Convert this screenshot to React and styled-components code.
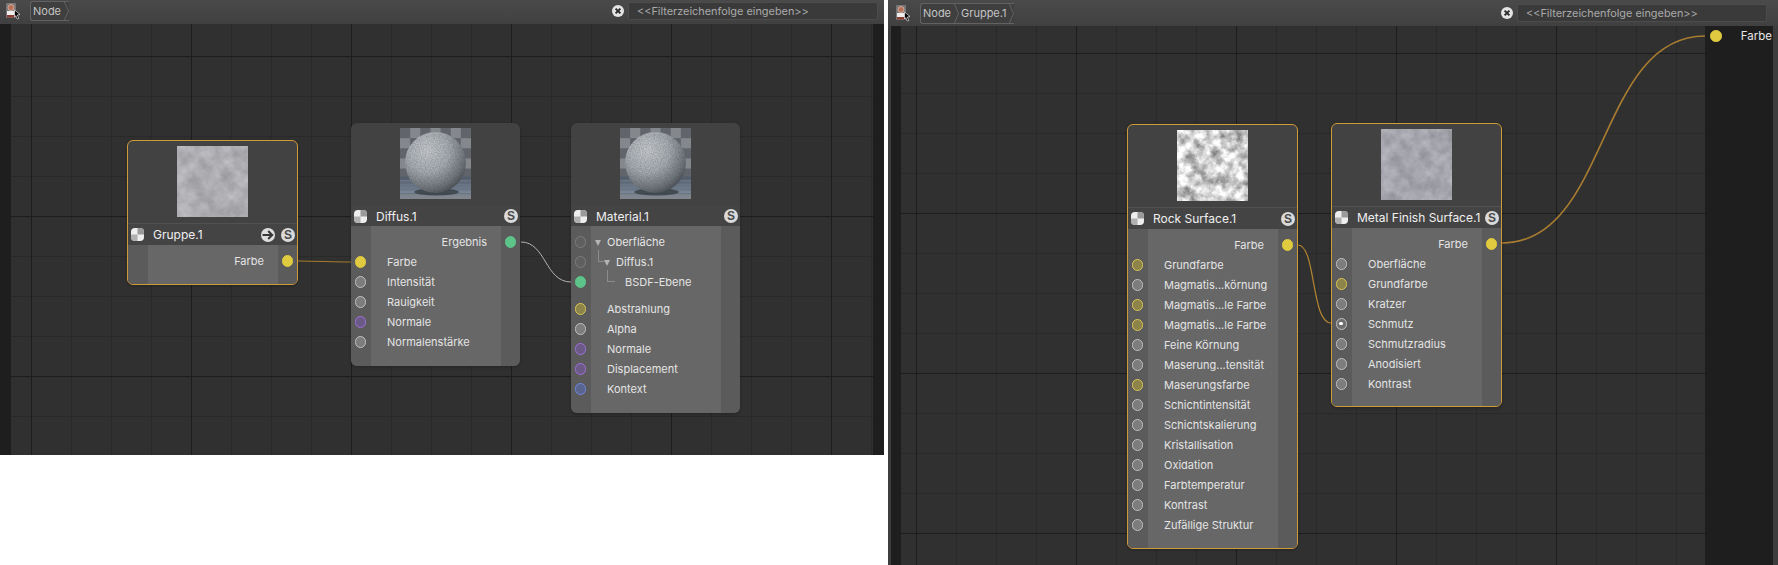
import React from "react";
import styled, { createGlobalStyle } from "styled-components";

const Global = createGlobalStyle`
  html, body { margin: 0; padding: 0; background: #fff; }
  #root { width: 1778px; height: 565px; overflow: hidden; }
`;

const Page = styled.div`
  display: flex;
  align-items: flex-start;
  gap: 4px;
  width: 1778px;
  height: 565px;
  background: #fff;
  font-family: Inter, "Liberation Sans", sans-serif;
`;

const Panel = styled.section`
  display: flex;
  flex-direction: column;
  width: ${(p) => p.$w}px;
  height: ${(p) => p.$h}px;
  background: #3d3d3d;
`;

const Toolbar = styled.header`
  display: flex;
  align-items: center;
  flex: none;
  height: ${(p) => p.$h}px;
  box-sizing: border-box;
  padding: 0 ${(p) => p.$right}px ${(p) => p.$bottom}px ${(p) => p.$left}px;
  background: linear-gradient(#4a4a4a, #404040);
`;

const AppIcon = styled.svg`
  flex: none;
  width: 17px;
  height: 18px;
  margin-right: 8px;
`;

const Crumbs = styled.nav`
  display: flex;
  align-items: stretch;
  height: ${(p) => p.$h}px;
  box-sizing: border-box;
  border: 1px solid #626262;
  border-right: 0;
  border-radius: 3px 0 0 3px;
  background: #3f3f3f;
  font-size: 11px;
  color: #c4c4c4;
`;

const Crumb = styled.span`
  display: flex;
  align-items: center;
  padding-left: 2px;
`;

const Chevron = styled.svg`
  flex: none;
  width: 5px;
  height: 100%;
  margin-left: 3px;
  overflow: visible;
`;

const Spacer = styled.div`
  flex: 1;
`;

const ClearIcon = styled.svg`
  flex: none;
  width: 12px;
  height: 12px;
  margin-right: 4px;
`;

const FilterBox = styled.div`
  flex: none;
  display: flex;
  align-items: center;
  width: 250px;
  height: 18px;
  box-sizing: border-box;
  padding-left: 8px;
  border: 1px solid #4c4c4c;
  border-radius: 2px;
  background: #3a3a3a;
  font-size: 10.9px;
  color: #aaa;
`;

const Frame = styled.div`
  flex: 1;
  display: flex;
  min-height: 0;
  padding: ${(p) => (p.$inset ? "0 5px 0 3px" : "0")};
`;

const Canvas = styled.div`
  position: relative;
  flex: 1;
  display: flex;
  justify-content: space-between;
  overflow: hidden;
  background: ${(p) => `
    linear-gradient(90deg, #1d1d1d 1px, transparent 1px) ${p.$mx}px 0 / 160px 100%,
    linear-gradient(#1d1d1d 1px, transparent 1px) 0 ${p.$my}px / 100% 160px,
    linear-gradient(90deg, #292929 1px, transparent 1px) ${p.$mx}px 0 / 40px 100%,
    linear-gradient(#292929 1px, transparent 1px) 0 ${p.$my}px / 100% 40px,
    #303030`};
`;

const Strip = styled.aside`
  flex: none;
  width: ${(p) => p.$w}px;
  background: #1e1e1e;
`;

const OutputRow = styled.div`
  display: flex;
  align-items: center;
  justify-content: space-between;
  height: 20px;
  padding: 0 1px 0 5px;
  font-size: 11.5px;
  color: #e6e6e6;
`;

const Wires = styled.svg`
  position: absolute;
  inset: 0;
  width: 100%;
  height: 100%;
  pointer-events: none;
`;

const NodeBox = styled.article`
  position: absolute;
  left: ${(p) => p.$x}px;
  top: ${(p) => p.$y}px;
  width: ${(p) => p.$w}px;
  box-sizing: border-box;
  overflow: hidden;
  border-radius: 6px;
  border: ${(p) => (p.$selected ? "1px solid #cf9a38" : "0")};
  background: #424242;
  box-shadow: 0 1px 3px rgba(0, 0, 0, 0.25);
`;

const Preview = styled.div`
  display: flex;
  justify-content: center;
  height: ${(p) => (p.$selected ? 82 : 83)}px;
  box-sizing: border-box;
  padding-top: 5px;
`;

const Thumb = styled.svg`
  display: block;
  width: 71px;
  height: 71px;
`;

const Header = styled.div`
  display: flex;
  align-items: center;
  height: ${(p) => (p.$selected ? 22 : 20)}px;
  box-sizing: border-box;
  padding: 0 ${(p) => (p.$selected ? 2 : 2)}px 0 3px;
  border-top: ${(p) => (p.$selected ? "1px solid #515151" : "0")};
  background: #444;
`;

const Checker = styled.svg`
  flex: none;
  width: 13px;
  height: 13px;
  margin-right: 9px;
`;

const Title = styled.h3`
  flex: 1;
  margin: 0;
  font-size: 12px;
  font-weight: 400;
  white-space: nowrap;
  color: #f0f0f0;
`;

const SBadge = styled.span`
  flex: none;
  display: flex;
  align-items: center;
  justify-content: center;
  width: 14px;
  height: 14px;
  border-radius: 50%;
  background: #dadada;
  font-family: "Liberation Sans", sans-serif;
  font-size: 12px;
  font-weight: 700;
  color: #4a4a4a;
`;

const ArrowIcon = styled.svg`
  flex: none;
  width: 14px;
  height: 14px;
  margin-right: 6px;
`;

const Body = styled.div`
  padding: 6px 0 ${(p) => p.$pad}px;
  background: linear-gradient(
    90deg,
    #5b5b5b 0 20px,
    #676767 20px calc(100% - 19px),
    #5b5b5b calc(100% - 19px)
  );
`;

const Row = styled.div`
  display: grid;
  grid-template-columns: 19px 1fr 19px;
  align-items: center;
  height: 20px;
  margin-top: ${(p) => p.$gap || 0}px;
`;

const PortSlot = styled.div`
  display: flex;
  justify-content: center;
`;

const Label = styled.span`
  position: relative;
  justify-self: ${(p) => (p.$out ? "end" : "start")};
  padding-left: ${(p) => (p.$out ? 0 : 17 + (p.$indent || 0) * 9)}px;
  padding-right: ${(p) => (p.$out ? 14 : 0)}px;
  font-size: 11px;
  white-space: nowrap;
  color: #e4e4e4;
`;

const PORT = {
  solidY: { b: "#e0ca40", f: "#e0ca40" },
  solidG: { b: "#5dc389", f: "#5dc389" },
  gray: { b: "#c0c0c0", f: "#7d7d7d" },
  dim: { b: "#7e7e7e", f: "#5f5f5f" },
  yellow: { b: "#dcc658", f: "#8c8448" },
  purple: { b: "#a070dc", f: "#6c5a86" },
  blue: { b: "#6e88e0", f: "#59648f" },
  active: { b: "#c0c0c0", f: "#6f6f6f" },
};

const Port = styled.span`
  position: relative;
  display: block;
  width: 11.5px;
  height: 11.5px;
  box-sizing: border-box;
  border-radius: 50%;
  border: 1.5px solid ${(p) => PORT[p.$kind].b};
  background: ${(p) => PORT[p.$kind].f};
  &::after {
    content: "";
    display: ${(p) => (p.$kind === "active" ? "block" : "none")};
    position: absolute;
    left: 2.5px;
    top: 2.5px;
    width: 3.5px;
    height: 3.5px;
    border-radius: 50%;
    background: #fff;
  }
`;

const Twist = styled.i`
  position: absolute;
  left: ${(p) => 17 + (p.$indent || 0) * 9 - 12}px;
  top: 5px;
  width: 0;
  height: 0;
  border-left: 3px solid transparent;
  border-right: 3px solid transparent;
  border-top: 6px solid #b4b4b4;
`;

const TreeLine = styled.i`
  position: absolute;
  left: ${(p) => 17 + p.$indent * 9 - 18}px;
  top: -5px;
  width: ${(p) => p.$len}px;
  height: 12px;
  box-sizing: border-box;
  border-left: 1px solid #8c8c8c;
  border-bottom: 1px solid #8c8c8c;
`;

function Stone({ id, k, c, freq, tint = 0 }) {
  const row = (extra) => `${k} 0 0 0 ${c + extra}`;
  return (
    <Thumb viewBox="0 0 70 70">
      <filter id={id} x="0" y="0" width="100%" height="100%" colorInterpolationFilters="sRGB">
        <feTurbulence type="fractalNoise" baseFrequency={freq} numOctaves="4" seed="7" />
        <feColorMatrix values={`${row(0)} ${row(0)} ${row(tint)} 0 0 0 0 1`} />
      </filter>
      <rect width="70" height="70" filter={`url(#${id})`} />
    </Thumb>
  );
}

function Sphere({ id }) {
  const cells = [];
  for (let y = 0; y < 5; y++) {
    for (let x = 0; x < 7; x++) {
      if ((x + y) % 2 === 0) cells.push(<rect key={`${x}-${y}`} x={x * 10} y={y * 10} width="10" height="10" fill="#61646a" />);
    }
  }
  return (
    <Thumb viewBox="0 0 70 70">
      <defs>
        <radialGradient id={`${id}g`} cx="0.36" cy="0.3" r="0.8">
          <stop offset="0" stopColor="#c8ccd0" />
          <stop offset="0.45" stopColor="#a8adb2" />
          <stop offset="0.8" stopColor="#6c7278" />
          <stop offset="1" stopColor="#3d4248" />
        </radialGradient>
        <linearGradient id={`${id}f`} x1="0" y1="0" x2="0" y2="1">
          <stop offset="0" stopColor="#4f5a68" />
          <stop offset="1" stopColor="#8a97a8" />
        </linearGradient>
        <filter id={`${id}n`} x="0" y="0" width="100%" height="100%" colorInterpolationFilters="sRGB">
          <feTurbulence type="fractalNoise" baseFrequency="0.8" numOctaves="2" seed="3" result="n" />
          <feColorMatrix in="n" values="0 0 0 0 0.22  0 0 0 0 0.22  0 0 0 0 0.24  0.5 0 0 0 -0.15" result="a" />
          <feComposite in="a" in2="SourceAlpha" operator="in" result="b" />
          <feMerge>
            <feMergeNode in="SourceGraphic" />
            <feMergeNode in="b" />
          </feMerge>
        </filter>
      </defs>
      <rect width="70" height="70" fill="#84878c" />
      {cells}
      <rect y="48" width="70" height="22" fill={`url(#${id}f)`} />
      <path d="M0 52H70M0 56H70M0 60.5H70M0 65H70" stroke="#6a7584" strokeWidth="1.6" />
      <rect y="65" width="70" height="5" fill="#7d8288" opacity=".8" />
      <ellipse cx="36" cy="63" rx="22" ry="3.5" fill="#2e3338" opacity=".7" />
      <circle cx="35" cy="34" r="30" fill={`url(#${id}g)`} filter={`url(#${id}n)`} />
    </Thumb>
  );
}

const CheckerGlyph = () => (
  <Checker viewBox="0 0 13 13">
    <defs>
      <clipPath id="ckr">
        <rect width="13" height="13" rx="4" />
      </clipPath>
    </defs>
    <g clipPath="url(#ckr)">
      <rect width="13" height="13" fill="#eeeeee" />
      <rect x="6.5" width="6.5" height="6.5" fill="#9a9a9a" />
      <rect y="6.5" width="6.5" height="6.5" fill="#b0b0b0" />
    </g>
  </Checker>
);

const GoGlyph = () => (
  <ArrowIcon viewBox="0 0 14 14">
    <circle cx="7" cy="7" r="7" fill="#dedede" />
    <path d="M1.5 7H11M7.2 3L11.2 7L7.2 11" fill="none" stroke="#383838" strokeWidth="2.1" />
  </ArrowIcon>
);

const Node = ({ x, y, w, title, selected, go, preview, rows, pad }) => (
  <NodeBox $x={x} $y={y} $w={w} $selected={selected}>
    <Preview $selected={selected}>{preview}</Preview>
    <Header $selected={selected}>
      <CheckerGlyph />
      <Title>{title}</Title>
      {go && <GoGlyph />}
      <SBadge>S</SBadge>
    </Header>
    <Body $pad={pad}>
      {rows.map((r, i) => (
        <Row key={i} $gap={r.gap}>
          <PortSlot>{!r.out && <Port $kind={r.k} />}</PortSlot>
          <Label $out={r.out} $indent={r.indent}>
            {r.twist && <Twist $indent={r.indent} />}
            {r.tree && <TreeLine $indent={r.indent} $len={r.tree} />}
            {r.t}
          </Label>
          <PortSlot>{r.out && <Port $kind={r.k} />}</PortSlot>
        </Row>
      ))}
    </Body>
  </NodeBox>
);

const ins = (k, t, extra = {}) => ({ k, t, ...extra });
const outp = (k, t) => ({ k, t, out: true });

const PanelToolbar = ({ h, left, right, bottom, crumbs, crumbH }) => (
  <Toolbar $h={h} $left={left} $right={right} $bottom={bottom}>
    <AppIcon viewBox="0 0 17 18">
      <rect x="1" y="1" width="10" height="15" rx="1" fill="#777" />
      <circle cx="6" cy="5.5" r="3" fill="#b9705a" stroke="#d9b8a0" strokeWidth=".8" />
      <rect x="2" y="9" width="8" height="4" fill="#eee" />
      <rect x="2" y="13" width="8" height="2.5" fill="#8a3d33" />
      <path d="M9.5 8L15 12.5L12.3 13L13.8 16.5L12.2 17L10.8 13.6L9.5 15Z" fill="#000" stroke="#fff" strokeWidth=".6" />
    </AppIcon>
    <Crumbs $h={crumbH}>
      {crumbs.map((c) => (
        <React.Fragment key={c}>
          <Crumb>{c}</Crumb>
          <Chevron viewBox="0 0 5 20" preserveAspectRatio="none">
            <path d="M0 -1L4.5 10L0 21" fill="none" stroke="#626262" strokeWidth="1" vectorEffect="non-scaling-stroke" />
          </Chevron>
        </React.Fragment>
      ))}
    </Crumbs>
    <Spacer />
    <ClearIcon viewBox="0 0 12 12">
      <circle cx="6" cy="6" r="6" fill="#e4e4e4" />
      <path d="M3.6 3.6L8.4 8.4M8.4 3.6L3.6 8.4" stroke="#2c2c2c" strokeWidth="2" />
    </ClearIcon>
    <FilterBox>{"<<Filterzeichenfolge eingeben>>"}</FilterBox>
  </Toolbar>
);

const rockRows = [
  outp("solidY", "Farbe"),
  ins("yellow", "Grundfarbe"),
  ins("gray", "Magmatis...körnung"),
  ins("yellow", "Magmatis...le Farbe"),
  ins("yellow", "Magmatis...le Farbe"),
  ins("gray", "Feine Körnung"),
  ins("gray", "Maserung...tensität"),
  ins("yellow", "Maserungsfarbe"),
  ins("gray", "Schichtintensität"),
  ins("gray", "Schichtskalierung"),
  ins("gray", "Kristallisation"),
  ins("gray", "Oxidation"),
  ins("gray", "Farbtemperatur"),
  ins("gray", "Kontrast"),
  ins("gray", "Zufällige Struktur"),
];

export default function App() {
  return (
    <Page>
      <Global />
      <Panel $w={884} $h={455}>
        <PanelToolbar h={24} left={5} right={6} bottom={2} crumbs={["Node"]} crumbH={20} />
        <Frame>
          <Canvas $mx={31} $my={32}>
            <Strip $w={11} />
            <Strip $w={11} />
            <Wires>
              <path d="M298 237C320 237 330 238 351 238" fill="none" stroke="#a67a2e" strokeWidth="1.2" />
              <path d="M521 218C546 218 545 258 571 258" fill="none" stroke="#b4b4b4" strokeWidth="1" />
            </Wires>
            <Node
              x={127} y={116} w={171} title="Gruppe.1" selected go pad={13}
              preview={<Stone id="s1" k={0.25} c={0.55} freq={0.07} tint={0.02} />}
              rows={[outp("solidY", "Farbe")]}
            />
            <Node
              x={351} y={99} w={169} title="Diffus.1" pad={14}
              preview={<Sphere id="a" />}
              rows={[
                outp("solidG", "Ergebnis"),
                ins("solidY", "Farbe"),
                ins("gray", "Intensität"),
                ins("gray", "Rauigkeit"),
                ins("purple", "Normale"),
                ins("gray", "Normalenstärke"),
              ]}
            />
            <Node
              x={571} y={99} w={169} title="Material.1" pad={14}
              preview={<Sphere id="b" />}
              rows={[
                ins("dim", "Oberfläche", { twist: true }),
                ins("dim", "Diffus.1", { indent: 1, twist: true, tree: 6 }),
                ins("solidG", "BSDF-Ebene", { indent: 2, tree: 8 }),
                ins("yellow", "Abstrahlung", { gap: 7 }),
                ins("gray", "Alpha"),
                ins("purple", "Normale"),
                ins("purple", "Displacement"),
                ins("blue", "Kontext"),
              ]}
            />
          </Canvas>
        </Frame>
      </Panel>
      <Panel $w={890} $h={565}>
        <PanelToolbar h={26} left={7} right={11} bottom={0} crumbs={["Node", "Gruppe.1"]} crumbH={21} />
        <Frame $inset>
          <Canvas $mx={25} $my={27}>
            <Strip $w={10} />
            <Strip $w={68}>
              <OutputRow>
                <Port $kind="solidY" />
                Farbe
              </OutputRow>
            </Strip>
            <Wires>
              <path d="M407 219C425 219 420 297 440 297" fill="none" stroke="#b5862f" strokeWidth="1.2" />
              <path d="M611 217C718 217 706 10 814 10" fill="none" stroke="#a87c30" strokeWidth="1.6" />
            </Wires>
            <Node
              x={236} y={98} w={171} title="Rock Surface.1" selected pad={13}
              preview={<Stone id="s2" k={1.1} c={0.26} freq={0.09} />}
              rows={rockRows}
            />
            <Node
              x={440} y={97} w={171} title="Metal Finish Surface.1" selected pad={12}
              preview={<Stone id="s3" k={0.25} c={0.52} freq={0.08} tint={0.03} />}
              rows={[
                outp("solidY", "Farbe"),
                ins("gray", "Oberfläche"),
                ins("yellow", "Grundfarbe"),
                ins("gray", "Kratzer"),
                ins("active", "Schmutz"),
                ins("gray", "Schmutzradius"),
                ins("gray", "Anodisiert"),
                ins("gray", "Kontrast"),
              ]}
            />
          </Canvas>
        </Frame>
      </Panel>
    </Page>
  );
}
